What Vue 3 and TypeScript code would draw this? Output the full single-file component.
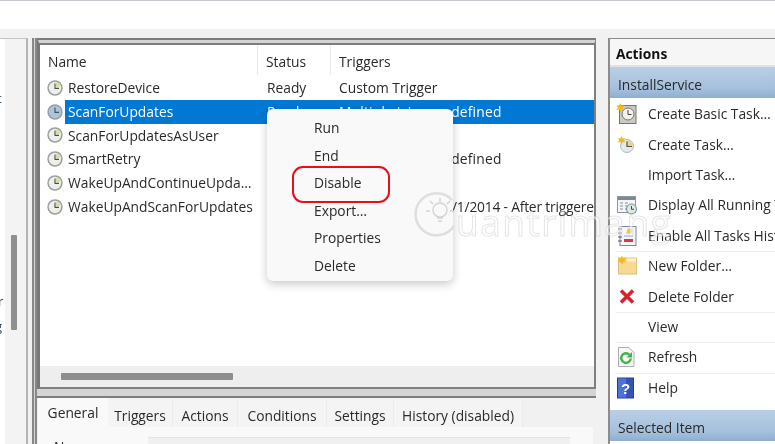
<script setup lang="ts">
interface Task { name: string; status: string; trigger: string; selected?: boolean }
const tasks: Task[] = [
  { name: 'RestoreDevice', status: 'Ready', trigger: 'Custom Trigger' },
  { name: 'ScanForUpdates', status: 'Ready', trigger: 'Multiple triggers defined', selected: true },
  { name: 'ScanForUpdatesAsUser', status: 'Ready', trigger: '' },
  { name: 'SmartRetry', status: 'Ready', trigger: 'Multiple triggers defined' },
  { name: 'WakeUpAndContinueUpda…', status: 'Ready', trigger: '' },
  { name: 'WakeUpAndScanForUpdates', status: 'Ready', trigger: 'At 11:00 PM on 11/1/2014 - After triggered' },
]
const menu = ['Run', 'End', 'Disable', 'Export…', 'Properties', 'Delete']
const tabs = ['General', 'Triggers', 'Actions', 'Conditions', 'Settings', 'History (disabled)']
interface Action { label: string; icon: string; sep?: boolean }
const actions: Action[] = [
  { label: 'Create Basic Task…', icon: 'basic' },
  { label: 'Create Task…', icon: 'task' },
  { label: 'Import Task…', icon: '' },
  { label: 'Display All Running Tasks', icon: 'display' },
  { label: 'Enable All Tasks History', icon: 'history', sep: true },
  { label: 'New Folder…', icon: 'folder' },
  { label: 'Delete Folder', icon: 'delete', sep: true },
  { label: 'View', icon: '', sep: true },
  { label: 'Refresh', icon: 'refresh', sep: true },
  { label: 'Help', icon: 'help' },
]
</script>

<template>
  <div class="page">
    <div class="top"></div>
    <div class="work">
      <aside class="tree">
        <span class="frag f1">t</span>
        <span class="frag f2">r</span>
        <span class="frag f3">g</span>
        <div class="tree-white"></div>
        <div class="tree-track"><div class="tree-thumb"></div></div>
      </aside>

      <main class="center">
        <section class="upper">
          <div class="head">
            <div class="col-name">Name</div>
            <div class="col-status">Status</div>
            <div class="col-trig">Triggers</div>
          </div>
          <div class="rows">
            <div v-for="t in tasks" :key="t.name" class="row">
              <svg class="clock" viewBox="0 0 16 16" width="16" height="16">
                <circle cx="8" cy="8" r="7.7" fill="#999da0" />
                <circle cx="8" cy="8" r="6.200" :fill="t.selected ? '#a9c6de' : '#eef0e6'" />
                <path v-if="!t.selected" d="M9 2.600a5.500 5.500 0 0 1 4.300 4.200H9z" fill="#cfe08f" />
                <path d="M8 3.600V8.400H12" fill="none" stroke="#4a4f52" stroke-width="1.100" />
              </svg>
              <div class="cell-name" :class="{ on: t.selected }">{{ t.name }}</div>
              <div class="cell-rest" :class="{ on: t.selected }">
                <span class="cell-status">{{ t.status }}</span>
                <span class="cell-trig" :class="{ long: t.trigger.startsWith('Multiple'), tight: t.trigger.startsWith('At') }">{{ t.trigger }}</span>
              </div>
            </div>
          </div>
          <div class="hscroll"><div class="hthumb"></div></div>
        </section>

        <section class="lower">
          <div class="tabs">
            <div v-for="(t, i) in tabs" :key="t" class="tab" :class="{ active: i === 0 }">{{ t }}</div>
          </div>
          <div class="tab-body">
            <div class="name-label">Name:</div>
            <div class="name-field"></div>
          </div>
        </section>
      </main>

      <aside class="actions">
        <div class="a-title">Actions</div>
        <div class="a-bar">InstallService</div>
        <div class="a-list">
          <div v-for="a in actions" :key="a.label" class="a-item" :class="{ sep: a.sep }">
            <span class="a-ico">
              <svg v-if="a.icon === 'basic'" viewBox="0 0 22 22" width="22" height="22">
                <rect x="3.500" y="2.500" width="16.500" height="18" fill="#cbc7c1" stroke="#8a6f62" />
                <circle cx="12" cy="11" r="6" fill="#f2f2ea" stroke="#777" />
                <path d="M12 7V11.500H15.500" fill="none" stroke="#444" />
                <path d="M4.500 0l1.200 2.800 3-.5-1.700 2.400 1.700 2.400-3-.5L4.500 9.500 3.300 6.600l-3 .5 1.700-2.400L.3 2.300l3 .5z" fill="#f6b820" />
              </svg>
              <svg v-else-if="a.icon === 'task'" viewBox="0 0 22 22" width="22" height="22">
                <circle cx="11" cy="12" r="6.500" fill="#e4e8e8" stroke="#a9bccb" />
                <path d="M11 6a6 6 0 0 1 6 6h-6z" fill="#f2cf87" />
                <path d="M11 7.500V12.500H16" fill="none" stroke="#4f5558" stroke-width="1.200" />
                <path d="M5.500 2l1.100 2.500 2.700-.4-1.500 2.200 1.500 2.200-2.700-.4-1.100 2.500-1.100-2.500-2.700.4 1.500-2.200-1.500-2.200 2.700.4z" fill="#f6b820" />
              </svg>
              <svg v-else-if="a.icon === 'display'" viewBox="0 0 22 22" width="22" height="22">
                <rect x="1.500" y="2.500" width="18" height="16" fill="#f4f4f4" stroke="#8d97a3" />
                <rect x="2" y="3" width="17" height="3" fill="#7d8894" />
                <path d="M4 9h3M9 9h3M4 12h3M9 12h3M4 15h3M9 15h3" stroke="#a9b2bb" stroke-width="1.300" />
                <circle cx="15.500" cy="15" r="5" fill="#dfe8dc" stroke="#6f8da5" />
                <path d="M15.500 12v3.300h2.500" fill="none" stroke="#445" />
              </svg>
              <svg v-else-if="a.icon === 'history'" viewBox="0 0 22 22" width="22" height="22">
                <rect x="4" y="1.500" width="16" height="19" fill="#f5f6fa" stroke="#7d86a8" />
                <path d="M2 4h4M2 8h4M2 12h4M2 16h4" stroke="#555" stroke-width="1.200" />
                <path d="M12 3.500h4v5h-6z" fill="#ecc63c" />
                <path d="M8 14h9v3H8z" fill="#d6394a" />
                <path d="M8 11h9" stroke="#9ba6c8" />
              </svg>
              <svg v-else-if="a.icon === 'folder'" viewBox="0 0 22 22" width="22" height="22">
                <rect x="2.500" y="3" width="18" height="16" fill="#f6da94" stroke="#ddc07a" />
                <rect x="11" y="3.500" width="9" height="3" fill="#fdf3d2" />
                <path d="M6 .5l1.200 2.800 3-.5-1.700 2.400 1.700 2.400-3-.5L6 10 4.800 7.100l-3 .5 1.700-2.400-1.700-2.400 3 .5z" fill="#f6b820" />
              </svg>
              <svg v-else-if="a.icon === 'delete'" viewBox="0 0 22 22" width="22" height="22">
                <path d="M5 4.500l12 12M17 4.500l-12 12" stroke="#d3242f" stroke-width="3.600" />
              </svg>
              <svg v-else-if="a.icon === 'refresh'" viewBox="0 0 22 22" width="22" height="22">
                <path d="M2.500 1.500h10.500l5 5v14h-15.500z" fill="#f6f7f5" stroke="#a9aeaa" />
                <path d="M14.800 12.500a4.800 4.800 0 1 1-1.500-4" fill="none" stroke="#3fb24b" stroke-width="2.400" />
                <path d="M16 6v5.500h-5.500z" fill="#3fb24b" />
              </svg>
              <svg v-else-if="a.icon === 'help'" viewBox="0 0 22 22" width="22" height="22">
                <rect x="1.500" y="1" width="16" height="20" fill="#3453b4" stroke="#26408f" />
                <rect x="2" y="1.500" width="8" height="19" fill="#4d72d8" />
                <text x="9.500" y="16.500" class="q">?</text>
              </svg>
            </span>
            <span class="a-label">{{ a.label }}</span>
          </div>
        </div>
        <div class="a-bar last">Selected Item</div>
      </aside>
    </div>

    <div class="ctx">
      <div v-for="m in menu" :key="m" class="ctx-item">{{ m }}</div>
      <div class="ring"></div>
    </div>

    <div class="mark">
      <svg class="bulb" viewBox="0 0 46 52" width="46" height="52">
        <path d="M38 12A21 21 0 1 0 40 38" fill="none" stroke="#dedede" stroke-width="2.500" />
        <circle cx="26" cy="22" r="7" fill="none" stroke="#d4d4d4" stroke-width="1.500" />
        <path d="M23 30h6M24 33h4M26 10v4M16 13l3 3M36 13l-3 3M12 23h4M36 23h4" stroke="#d4d4d4" stroke-width="1.500" />
      </svg>
      <span class="mark-text">uantrimang</span>
    </div>
  </div>
</template>

<style>
html, body { margin: 0; background: #f0f0f0; }
</style>

<style scoped>
.page {
  position: relative;
  width: 775px;
  height: 444px;
  overflow: hidden;
  background: #f1f1f1;
  font-family: "Open Sans", "Noto Sans", sans-serif;
  font-size: 13.8px;
  color: #2a2a2a;
  filter: blur(0.3px);
}
.top {
  height: 28px;
  background: #fff;
  border-top: 1px solid #c6c6ce;
}
.work {
  display: flex;
  height: 415px;
  padding-top: 9px;
  box-sizing: border-box;
}
.tree {
  position: relative;
  width: 26px;
  flex: none;
  display: flex;
  border-top: 1px solid #c4c4c4;
  border-right: 2px solid #b4b4b4;
}
.tree-white { width: 5px; flex: none; background: #fff; }
.tree-track { flex: 1; background: #f3f3f3; padding: 196px 0 0 6px; }
.tree-thumb { width: 6px; height: 95px; background: #8f8f8f; border-radius: 1px; }
.frag { position: absolute; z-index: 1; color: #1c3a55; font-size: 13px; }
.f1 { top: 50px; left: -3px; }
.f2 { top: 253px; left: -2px; }
.f3 { top: 278px; left: -5px; }
.center {
  width: 564px;
  margin-left: 4px;
  flex: none;
  box-sizing: border-box;
  border-left: 5px double #888;
  background: #d4d4d4;
  display: flex;
  flex-direction: column;
}
.upper {
  height: 351px;
  flex: none;
  box-sizing: border-box;
  border-top: 7px double #7c7c7c;
  border-left: 3px solid #777;
  border-right: 2px solid #808080;
  border-bottom: 2px solid #808080;
  background: #d4d4d4;
  display: flex;
  flex-direction: column;
}
.head {
  display: flex;
  height: 31px;
  flex: none;
  background: #fff;
}
.col-name { width: 218px; padding-left: 8px; height: 30px; line-height: 34px; border-right: 1px solid #e9e9e9; box-sizing: border-box; }
.col-status { width: 73px; padding-left: 8px; height: 30px; line-height: 34px; border-right: 1px solid #e9e9e9; box-sizing: border-box; }
.col-trig { padding-left: 8px; height: 30px; line-height: 34px; }
.rows { flex: 1; overflow: hidden; background: #fff; }
.row {
  display: flex;
  height: 23.8px;
  align-items: center;
  white-space: nowrap;
}
.clock { margin-left: 7px; flex: none; }
.cell-name {
  width: 202px;
  flex: none;
  margin-left: 2px;
  padding-left: 3px;
  line-height: 23.8px;
  box-sizing: border-box;
}
.cell-rest {
  flex: 1;
  min-width: 0;
  display: flex;
  line-height: 23.8px;
  overflow: hidden;
}
.cell-name.on, .cell-rest.on { background: #0078d4; color: #fff; }
.cell-status { width: 72px; flex: none; box-sizing: border-box; }
.cell-trig { flex: none; }
.cell-trig.long { letter-spacing: 0.2px; }
.cell-trig.tight { letter-spacing: -0.2px; }
.hscroll {
  height: 21px;
  flex: none;
  background: #eeeeee;
  padding: 7px 0 0 21px;
  box-sizing: border-box;
}
.hthumb { width: 172px; height: 7px; background: #8e8e8e; border-radius: 1px; }
.lower {
  margin-top: 7px;
  flex: 1;
  min-height: 0;
  border-top: 2px solid #7d7d7d;
  padding-left: 1px;
  background: #f1f1f1;
  overflow: hidden;
}
.tabs {
  display: grid;
  grid-template-columns: 70px 65px 65px 89px 67px 129px;
  height: 29px;
}
.tab {
  margin-top: 2px;
  height: 27px;
  padding-top: 6px;
  box-sizing: border-box;
  text-align: center;
  background: #f4f4f4;
  border-right: 1px solid #ebebeb;
  white-space: nowrap;
  line-height: 20px;
}
.tab.active {
  margin-top: 0;
  height: 29px;
  padding-top: 5px;
  background: #f9f9f9;
  border-right: none;
}
.tab-body {
  display: flex;
  height: 17px;
  width: 555px;
  overflow: hidden;
  background: #f9f9f9;
  padding: 10px 0 0 16px;
  box-sizing: border-box;
}
.name-label { width: 94px; flex: none; line-height: 20px; margin-top: 0; }
.name-field { width: 422px; height: 14px; background: #f0f0f0; border-top: 1px solid #e4e4e4; }
.actions {
  width: 167px;
  flex: none;
  margin-left: 12px;
  background: #fff;
  border-top: 1px solid #8c8c8c;
  border-left: 2px solid #8c8c8c;
  display: flex;
  flex-direction: column;
}
.a-title {
  height: 28px;
  flex: none;
  padding-left: 6px;
  line-height: 30px;
  font-weight: 700;
  color: #111;
  background: #f6f6f6;
  border-bottom: 2px solid #e2e2e2;
  box-sizing: border-box;
}
.a-bar {
  height: 31px;
  flex: none;
  padding-left: 8px;
  line-height: 35px;
  background: linear-gradient(#b9cfe6, #a5c0dc 70%, #8eaecf);
  white-space: nowrap;
}
.a-list { flex: none; margin-top: 1px; }
.a-item {
  display: flex;
  align-items: center;
  height: 30.4px;
  margin-left: 6px;
  white-space: nowrap;
  box-sizing: border-box;
}
.a-item.sep { box-shadow: 0 1px 0 #eeeeee; }
.a-ico { width: 32px; flex: none; display: flex; align-items: center; height: 22px; }
.a-label { line-height: 20px; }
.q { font: 700 15px "Liberation Sans", sans-serif; fill: #fff; text-anchor: middle; }
.last { margin-top: 7px; }
.mark {
  position: absolute;
  left: 414px;
  top: 188px;
  display: flex;
  align-items: flex-end;
  pointer-events: none;
}
.bulb { flex: none; }
.mark-text {
  font-size: 37px;
  line-height: 44px;
  margin-left: -4px;
  margin-bottom: -4px;
  letter-spacing: 1.500px;
  color: rgba(255, 255, 255, 0.55);
  -webkit-text-stroke: 1px rgba(175, 175, 175, 0.32);
  white-space: nowrap;
}
.ctx {
  position: absolute;
  left: 267px;
  top: 109px;
  width: 186px;
  height: 172px;
  padding-top: 5px;
  box-sizing: border-box;
  background: #f9f9f9;
  border-radius: 6px;
  box-shadow: 0 3px 10px rgba(0, 0, 0, 0.22);
}
.ctx-item {
  height: 27.6px;
  line-height: 27.6px;
  padding-left: 47px;
}
.ring {
  position: absolute;
  left: 25px;
  top: 57px;
  width: 98px;
  height: 37px;
  box-sizing: border-box;
  border: 2px solid #e5101e;
  border-radius: 11px;
}
</style>
